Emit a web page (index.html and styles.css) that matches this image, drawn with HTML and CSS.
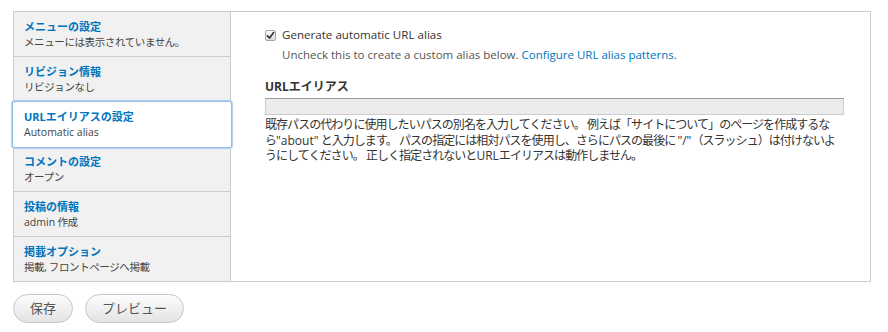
FILE: index.html
```html
<!DOCTYPE html>
<html lang="ja">
<head>
<meta charset="utf-8">
<link rel="stylesheet" href="styles.css">
</head>
<body>
<div class="page">
  <div class="tabs">
    <ul class="tab-list">
      <li class="tab"><a class="tab-title" href="#">メニューの設定</a><span class="tab-summary">メニューには表示されていません。</span></li>
      <li class="tab"><a class="tab-title" href="#">リビジョン情報</a><span class="tab-summary">リビジョンなし</span></li>
      <li class="tab selected"><a class="tab-title" href="#">URLエイリアスの設定</a><span class="tab-summary"><span class="latin">Automatic alias</span></span></li>
      <li class="tab"><a class="tab-title" href="#">コメントの設定</a><span class="tab-summary">オープン</span></li>
      <li class="tab"><a class="tab-title" href="#">投稿の情報</a><span class="tab-summary"><span class="latin">admin</span> 作成</span></li>
      <li class="tab last"><a class="tab-title" href="#">掲載オプション</a><span class="tab-summary">掲載, フロントページへ掲載</span></li>
    </ul>
    <div class="pane">
      <label class="check-row">
        <span class="checkbox"><svg viewBox="0 0 9 9" width="9" height="9"><path d="M1.5 4.8 L3.6 7 L7.6 1.6" fill="none" stroke="#333" stroke-width="1.7" stroke-linecap="round" stroke-linejoin="round"/></svg></span>
        <span class="check-label">Generate automatic URL alias</span>
      </label>
      <p class="check-desc">Uncheck this to create a custom alias below. <a href="#">Configure URL alias patterns.</a></p>
      <h3 class="field-label">URLエイリアス</h3>
      <div class="text-input"></div>
      <p class="field-desc">既存パスの代わりに使用したいパスの別名を入力してください。 例えば「サイトについて」のページを作成するな<br>ら<span class="latin">"about"</span> と入力します。 パスの指定には相対パスを使用し、さらにパスの最後に <span class="latin">"/"</span>（スラッシュ）は付けないよ<br>うにしてください。 正しく指定されないと<span class="latin">URL</span>エイリアスは動作しません。</p>
    </div>
  </div>
  <div class="actions">
    <button class="btn btn-save">保存</button>
    <button class="btn btn-preview">プレビュー</button>
  </div>
</div>
</body>
</html>
```
FILE: styles.css
```css
* { box-sizing: border-box; }
body {
  margin: 0;
  background: #fff;
  font-family: "Open Sans", "Noto Sans CJK JP", sans-serif;
  color: #333;
}
.page {
  padding: 11px 18px 0 13px;
}
.tabs {
  display: flex;
  width: 858px;
  height: 271px;
  border: 1px solid #ccc;
}
.tab-list {
  list-style: none;
  margin: 0;
  padding: 0;
  width: 217px;
  flex: none;
  background: #f1f1f1;
  border-right: 1px solid #ccc;
}
.tab {
  display: flex;
  flex-direction: column;
  height: 45px;
  padding: 8px 0 0 10px;
  border-bottom: 1px solid #ccc;
}
.tab.last { border-bottom: none; }
.tab.selected {
  position: relative;
  z-index: 1;
  background: #fff;
  margin: 0 -1px 0 -1px;
  padding-left: 11px;
  border-bottom-color: #fff;
  box-shadow: 0 0 0 1px #94bde8, 0 0 1px 2px #b2d0f0;
  border-radius: 2px;
}
.tab-title {
  font-size: 11px;
  font-weight: bold;
  line-height: 14px;
  color: #0074bd;
  text-decoration: none;
}
.tab-summary {
  font-size: 10.5px;
  letter-spacing: -0.4px;
  line-height: 16px;
  color: #444;
}
.latin {
  letter-spacing: 0;
}
.pane {
  flex: 1;
  padding: 15px 25px 0 34px;
  background: #fff;
}
.check-row {
  display: flex;
  align-items: center;
  height: 16px;
}
.checkbox {
  width: 11px;
  height: 11px;
  border: 1px solid #a5a5a5;
  border-radius: 2px;
  background: linear-gradient(#fdfdfd, #dedede);
  display: flex;
  align-items: center;
  justify-content: center;
  margin-right: 6px;
}
.check-label {
  font-size: 11.6px;
  line-height: 16px;
  color: #333;
}
.check-desc {
  margin: 4px 0 0 17px;
  font-size: 11.5px;
  line-height: 16px;
  color: #555;
}
.check-desc a {
  color: #0074bd;
  text-decoration: none;
}
.field-label {
  margin: 16px 0 0 0;
  font-size: 12px;
  font-weight: bold;
  line-height: 16px;
  color: #333;
}
.text-input {
  margin-top: 3px;
  height: 17px;
  width: 579px;
  background: #ececec;
  border: 1px solid #ccc;
  border-top-color: #999;
}
.field-desc {
  margin: 2px 0 0 0;
  white-space: nowrap;
  font-size: 12px;
  letter-spacing: -0.95px;
  line-height: 15.5px;
  color: #333;
}
.actions {
  display: flex;
  gap: 12px;
  margin-top: 12px;
}
.btn {
  height: 29px;
  padding: 0 16px;
  border: 1px solid #c6c6c6;
  border-radius: 15px;
  background: linear-gradient(#fdfdfd, #e3e3e3);
  font-family: "Open Sans", "Noto Sans CJK JP", sans-serif;
  font-size: 13px;
  color: #555;
  line-height: 27px;
}
```
